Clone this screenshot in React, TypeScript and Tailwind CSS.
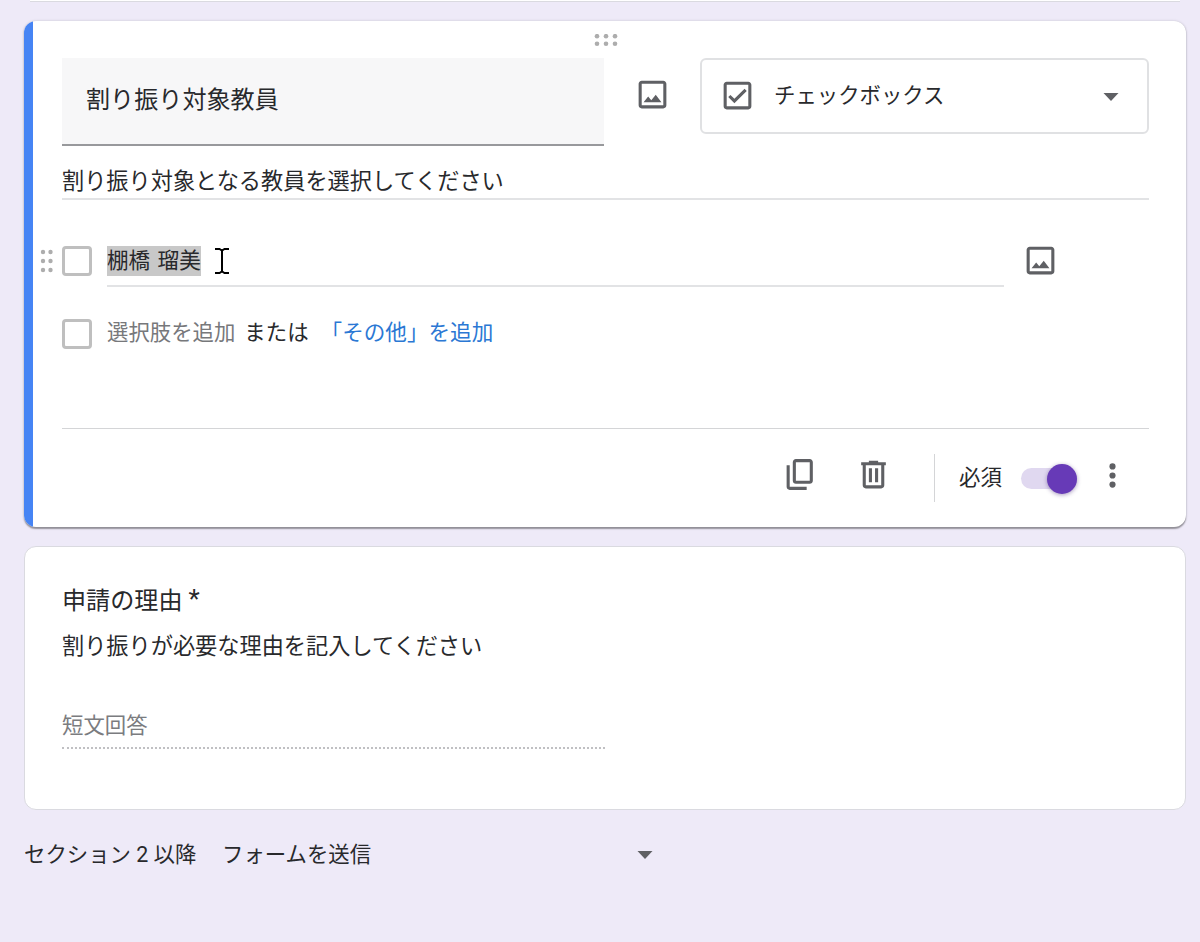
import type { ReactNode } from "react";

function Icon({ children, className = "size-[37px]" }: { children: ReactNode; className?: string }) {
  return (
    <svg viewBox="0 0 24 24" fill="currentColor" className={`shrink-0 text-[#5f6064] ${className}`}>
      {children}
    </svg>
  );
}

function ImageIcon() {
  return (
    <Icon>
      <path d="M19 5v14H5V5h14m0-2H5c-1.1 0-2 .9-2 2v14c0 1.1.9 2 2 2h14c1.1 0 2-.9 2-2V5c0-1.1-.9-2-2-2z" />
      <path d="M14.1 12.1l-2.9 3.6-2-2.4L6.2 17h11.6z" />
    </Icon>
  );
}

function Caret() {
  return (
    <svg viewBox="0 0 16 8" className="h-2 w-4 shrink-0 fill-[#5f6064]">
      <path d="M0.5 0h15L8 8z" />
    </svg>
  );
}

function CheckboxOutline() {
  return <span className="size-[30px] shrink-0 rounded-[4px] border-3 border-[#bfbfbf]" />;
}

function ActiveQuestion() {
  return (
    <section className="mt-[19px] flex h-[506px] overflow-hidden rounded-[12px] bg-white shadow-[0_1.5px_1.5px_rgba(0,0,0,0.36),0_0_3px_rgba(0,0,0,0.14)]">
      <div className="w-[9px] shrink-0 bg-[#4684f4]" />
      <div className="flex w-[1116px] flex-col pl-[29px]">
        <div className="flex h-[37px] w-[1087px] justify-center pt-[13px]">
          <svg viewBox="0 0 24 13" className="h-[13px] w-6 fill-[#adadad]">
            <circle cx="3" cy="2.2" r="2.3" />
            <circle cx="12" cy="2.2" r="2.3" />
            <circle cx="21" cy="2.2" r="2.3" />
            <circle cx="3" cy="9.8" r="2.3" />
            <circle cx="12" cy="9.8" r="2.3" />
            <circle cx="21" cy="9.8" r="2.3" />
          </svg>
        </div>

        {/* 質問タイトルと形式 */}
        <div className="flex h-[88px] w-[1087px] items-start">
          <div className="flex h-[88px] w-[542px] items-center border-b-2 border-[#98999c] bg-[#f7f7f8] pb-[2px] pl-6 text-[24.1px]">
            割り振り対象教員
          </div>
          <div className="ml-[29.5px] mt-[18px]">
            <ImageIcon />
          </div>
          <div className="ml-auto flex h-[76px] w-[449px] items-center rounded-[6px] border-2 border-[#e0e1e3] pb-[2px] pl-[17px] pr-[28px]">
            <Icon>
              <path d="M19 3H5c-1.1 0-2 .9-2 2v14c0 1.1.9 2 2 2h14c1.1 0 2-.9 2-2V5c0-1.1-.9-2-2-2zm0 16H5V5h14v14z" />
              <path d="M17.99 9l-1.41-1.42-6.59 6.59-2.58-2.57-1.42 1.41 4 3.99z" />
            </Icon>
            <span className="ml-[18px] grow pt-[3px]">チェックボックス</span>
            <div className="pt-[3px]">
              <Caret />
            </div>
          </div>
        </div>

        <div className="mt-[17px] flex h-[37px] w-[1087px] items-center border-b-2 border-[#e2e3e5] pt-[3px] text-[22.2px]">
          割り振り対象となる教員を選択してください
        </div>

        {/* 選択肢 */}
        <div className="-ml-[22px] mt-[36px] flex h-[51px] items-start pt-[10px]">
          <svg viewBox="0 0 13 24" className="mr-[9px] mt-[3px] h-6 w-[13px] fill-[#adadad]">
            <circle cx="3" cy="3" r="2.2" />
            <circle cx="10.500" cy="3" r="2.2" />
            <circle cx="3" cy="12" r="2.2" />
            <circle cx="10.500" cy="12" r="2.2" />
            <circle cx="3" cy="21" r="2.2" />
            <circle cx="10.500" cy="21" r="2.2" />
          </svg>
          <CheckboxOutline />
          <div className="ml-[15px] flex h-[41px] w-[897px] items-start border-b-2 border-[#e2e3e5]">
            <span className="h-[30px] w-[94px] whitespace-nowrap bg-[#c8c8c8] text-[21.6px] leading-[30px] [word-spacing:2px]">棚橋 瑠美</span>
            <svg viewBox="0 0 16 28" className="ml-[13px] mt-[1px] h-7 w-4 fill-none stroke-black stroke-[2]">
              <path d="M1 2h4.5L8 3.5 10.500 2H15M8 3v22M1 26h4.500L8 24.500l2.500 1.500H15" />
            </svg>
          </div>
          <div className="-mt-[4px] ml-[17.5px]">
            <ImageIcon />
          </div>
        </div>

        <div className="mt-[32px] flex h-[30px] items-center">
          <CheckboxOutline />
          <span className="ml-[15px] pb-[1px] text-[#77787b]">選択肢を追加</span>
          <span className="ml-[9px] pb-[1px]">または</span>
          <span className="ml-[12px] pb-[1px] text-[21.6px] text-[#2b78d4]">「その他」を追加</span>
        </div>

        <div className="mt-[79px] flex h-[98px] w-[1087px] items-start border-t border-[#d4d5d7]">
          <div className="ml-[720px] mt-[27px]">
            <Icon>
              <path d="M19 2H9C7.900 2 7 2.900 7 4v12c0 1.100.9 2 2 2h9c1.100 0 2-.9 2-2V4c0-1.100-.9-2-2-2zm-1 14H9V4h9v12zM3 6v14c0 1.100.9 2 2 2h11v-2H5V6H3z" fillRule="evenodd" />
            </Icon>
          </div>
          <div className="ml-[35.5px] mt-[27px]">
            <Icon>
              <path d="M15 4V3H9v1H4v2h1v13c0 1.100.9 2 2 2h10c1.100 0 2-.9 2-2V6h1V4h-5zm2 15H7V6h10v13z" />
              <path d="M9 8h2v9H9zM13 8h2v9h-2z" />
            </Icon>
          </div>
          <div className="ml-[42.5px] mt-[25px] h-12 w-px bg-[#d4d5d7]" />
          <span className="ml-[24px] mt-[33px] leading-[32px]">必須</span>
          <div className="ml-[19px] mt-[34.5px] flex h-[30px] w-14 items-center rounded-full">
            <div className="flex h-[21px] w-full items-center justify-end rounded-full bg-[#e0d8f0]">
              <div className="size-[30px] rounded-full bg-[#673ab7] shadow-[0_1px_4px_rgba(60,30,110,0.45)]" />
            </div>
          </div>
          <div className="ml-[17px] mt-[27.5px]">
            <Icon>
              <circle cx="12" cy="6.100" r="2" />
              <circle cx="12" cy="12" r="2" />
              <circle cx="12" cy="17.900" r="2" />
            </Icon>
          </div>
        </div>
      </div>
    </section>
  );
}

function ReasonQuestion() {
  return (
    <section className="mt-[19px] flex h-[264px] flex-col rounded-[12px] border border-[#dadae0] bg-white pl-[37px] pt-[36px]">
      <h2 className="flex text-[24.1px] leading-[36px]">
        申請の理由<span className="ml-[6px] -mt-[2px] text-[26px]">*</span>
      </h2>
      <p className="mt-[10px] text-[22.2px] leading-[34px]">割り振りが必要な理由を記入してください</p>
      <div className="mt-[46px] h-[40px] w-[543px] border-b-2 border-dotted border-[#c0c0c3] leading-[34px] text-[#7b7c7f]">
        短文回答
      </div>
    </section>
  );
}

export default function App() {
  return (
    <main className="h-[942px] overflow-hidden bg-[#eeeaf8] pl-6 pr-[14px] font-['Roboto','Noto_Sans_CJK_JP',sans-serif] text-[21.4px] text-[#28292c]">
      <div className="mx-[6px] h-[2px] border-b border-[#dadae0] bg-white" />
      <ActiveQuestion />
      <ReasonQuestion />
      <footer className="mt-[29px] flex h-8 items-center">
        <span className="w-[198px]">セクション 2 以降</span>
        <span className="w-[415px]">フォームを送信</span>
        <Caret />
      </footer>
    </main>
  );
}
